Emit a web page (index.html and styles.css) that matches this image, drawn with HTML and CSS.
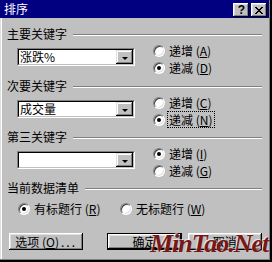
FILE: index.html
```html
<!DOCTYPE html>
<html lang="zh-CN">
<head>
<meta charset="utf-8">
<title>排序</title>
<link rel="stylesheet" href="styles.css">
</head>
<body>
<div class="window">
  <div class="titlebar">
    <span class="title">排序</span>
    <div class="caption-btns">
      <span class="cbtn help">?</span>
      <span class="cbtn close"><svg width="8" height="7" viewBox="0 0 8 7" shape-rendering="crispEdges"><path d="M0 0h2v1H0zM6 0h2v1H6zM1 1h2v1H1zM5 1h2v1H5zM2 2h4v1H2zM3 3h2v1H3zM2 4h4v1H2zM1 5h2v1H1zM5 5h2v1H5zM0 6h2v1H0zM6 6h2v1H6z"/></svg></span>
    </div>
  </div>
  <div class="content">
    <div class="group g1">
      <div class="ghead"><span class="lbl">主要关键字</span><span class="rule"></span></div>
      <div class="gbody">
        <div class="combo"><div class="combo-in"><span class="combo-text">涨跌%</span><span class="ddbtn"><span class="arrow"></span></span></div></div>
        <div class="radios">
          <div class="ropt"><span class="radio"></span><span class="rtext">递增 (<u>A</u>)</span></div>
          <div class="ropt"><span class="radio on"></span><span class="rtext">递减 (<u>D</u>)</span></div>
        </div>
      </div>
    </div>
    <div class="group">
      <div class="ghead"><span class="lbl">次要关键字</span><span class="rule"></span></div>
      <div class="gbody">
        <div class="combo"><div class="combo-in"><span class="combo-text">成交量</span><span class="ddbtn"><span class="arrow"></span></span></div></div>
        <div class="radios">
          <div class="ropt"><span class="radio"></span><span class="rtext">递增 (<u>C</u>)</span></div>
          <div class="ropt"><span class="radio on"></span><span class="rtext focus">递减 (<u>N</u>)</span></div>
        </div>
      </div>
    </div>
    <div class="group">
      <div class="ghead"><span class="lbl">第三关键字</span><span class="rule"></span></div>
      <div class="gbody">
        <div class="combo"><div class="combo-in"><span class="combo-text"></span><span class="ddbtn"><span class="arrow"></span></span></div></div>
        <div class="radios">
          <div class="ropt"><span class="radio on"></span><span class="rtext">递增 (<u>I</u>)</span></div>
          <div class="ropt"><span class="radio"></span><span class="rtext">递减 (<u>G</u>)</span></div>
        </div>
      </div>
    </div>
    <div class="group last">
      <div class="ghead"><span class="lbl">当前数据清单</span><span class="rule"></span></div>
      <div class="gbody2">
        <div class="ropt wide"><span class="radio on"></span><span class="rtext">有标题行 (<u>R</u>)</span></div>
        <div class="ropt"><span class="radio"></span><span class="rtext">无标题行 (<u>W</u>)</span></div>
      </div>
    </div>
    <div class="buttons">
      <span class="btn">选项 (<u>O</u>)<span class="dots">...</span></span>
      <span class="btn default">确定</span>
      <span class="btn">取消</span>
    </div>
  </div>
  <div class="watermark">MinTao.Net</div>
</div>
</body>
</html>
```
FILE: styles.css
```css
html, body {
  margin: 0;
  padding: 0;
  background: #c0c0c0;
}
body {
  font-family: "Noto Sans CJK SC", "Noto Sans", sans-serif;
  font-size: 12px;
  color: #000;
}
.window {
  position: relative;
  width: 272px;
  height: 262px;
  box-sizing: border-box;
  padding-right: 3px;
  background: #c0c0c0;
  box-shadow: inset -2px -2px #000, inset -3px -3px #808080, inset 1px 0 #dfdfdf, inset 2px 0 #fff;
  overflow: hidden;
}
.titlebar {
  display: flex;
  height: 18px;
  background: #000080;
  color: #fff;
}
.title {
  padding-left: 4px;
  line-height: 18px;
}
.caption-btns {
  margin-left: auto;
  display: flex;
  gap: 2px;
  padding: 3px 2px 0 0;
}
.cbtn {
  width: 16px;
  height: 14px;
  box-sizing: border-box;
  background: #c0c0c0;
  box-shadow: inset -1px -1px #000, inset 1px 1px #fff, inset -2px -2px #808080, inset 2px 2px #dfdfdf;
  display: flex;
  align-items: center;
  justify-content: center;
  color: #000;
}
.help {
  font: bold 12px/14px "Liberation Sans", sans-serif;
  padding-left: 1px;
}
.close svg {
  display: block;
  margin-top: 1px;
}
.content {
  padding: 9px 7px 0 7px;
}
.group {
  margin-bottom: 2px;
}
.group.g1 {
  margin-bottom: 3px;
}
.ghead {
  display: flex;
  align-items: center;
  height: 14px;
}
.lbl {
  line-height: 14px;
  white-space: nowrap;
}
.rule {
  flex: 1;
  height: 0;
  border-top: 1px solid #808080;
  border-bottom: 1px solid #fff;
  margin: 2px 0 0 6px;
}
.gbody {
  display: flex;
  padding-left: 10px;
  margin-top: 1px;
}
.combo {
  display: flex;
  width: 118px;
  height: 18px;
  box-sizing: border-box;
  margin-top: 6px;
  border: 1px solid;
  border-color: #808080 #fff #fff #808080;
}
.combo-in {
  flex: 1;
  display: flex;
  border: 1px solid;
  border-color: #000 #c0c0c0 #c0c0c0 #000;
  background: #fff;
}
.combo-text {
  flex: 1;
  padding-left: 1px;
  line-height: 14px;
}
.ddbtn {
  width: 17px;
  background: #c0c0c0;
  box-shadow: inset -1px -1px #000, inset 1px 1px #dfdfdf, inset -2px -2px #808080, inset 2px 2px #fff;
  display: flex;
  align-items: center;
  justify-content: center;
}
.arrow {
  width: 0;
  height: 0;
  margin-top: 2px;
  border-left: 3px solid transparent;
  border-right: 3px solid transparent;
  border-top: 3px solid #000;
}
.radios {
  display: flex;
  flex-direction: column;
  margin-left: 18px;
}
.ropt {
  display: flex;
  align-items: center;
  height: 17px;
  gap: 4px;
  white-space: nowrap;
}
.radio {
  position: relative;
  width: 12px;
  height: 12px;
  box-sizing: border-box;
  border-radius: 50%;
  background: #fff;
  border: 1px solid;
  border-color: #808080 #fff #fff #808080;
  box-shadow: inset 1px 1px #404040, inset -1px -1px #dfdfdf;
}
.radio.on::after {
  content: "";
  position: absolute;
  left: 3px;
  top: 3px;
  width: 4px;
  height: 4px;
  border-radius: 50%;
  background: #000;
}
.rtext {
  line-height: 13px;
}
.focus {
  outline: 1px dotted #000;
  outline-offset: 1px;
}
.gbody2 {
  display: flex;
  padding-left: 11px;
  margin-top: 5px;
}
.ropt.wide {
  width: 102px;
}
.buttons {
  display: flex;
  margin-top: 16px;
  padding-left: 2px;
}
.btn {
  width: 75px;
  height: 17px;
  box-sizing: border-box;
  background: #c0c0c0;
  box-shadow: inset -1px -1px #000, inset 1px 1px #fff, inset -2px -2px #808080, inset 2px 2px #dfdfdf;
  display: flex;
  align-items: center;
  justify-content: center;
  line-height: 15px;
  white-space: nowrap;
}
.btn.default {
  margin-left: 24px;
  margin-right: 6px;
  border: 1px solid #000;
}
.dots {
  letter-spacing: 2px;
  margin-left: 2px;
}
.watermark {
  position: absolute;
  left: 150px;
  top: 231px;
  font: italic bold 26px/26px "Liberation Serif", serif;
  letter-spacing: -1px;
  color: #7a1616;
  text-shadow: -1px -1px 0 rgba(255, 255, 255, 0.6);
  white-space: nowrap;
}
```
